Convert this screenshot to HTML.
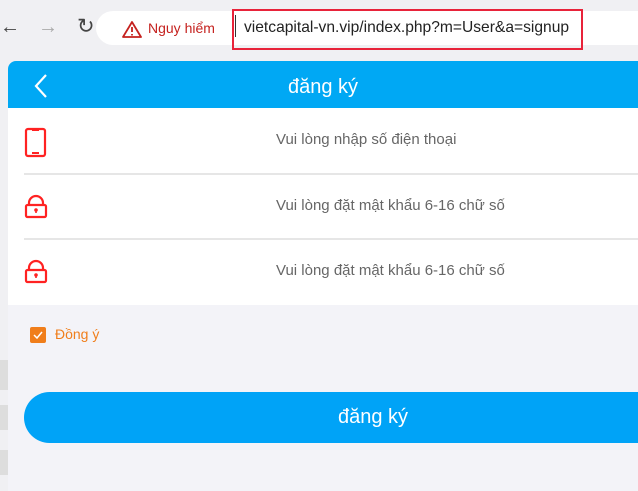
<!DOCTYPE html>
<html><head><style>
*{margin:0;padding:0;box-sizing:border-box}
body{width:638px;height:480px;overflow:hidden;background:#f0f0f3;font-family:"Liberation Sans","DejaVu Sans",sans-serif;position:relative}
.abs{position:absolute}
.pill{left:96px;top:11px;width:560px;height:34px;background:#fff;border-radius:17px 0 0 17px}
.red{left:232px;top:9px;width:351px;height:41px;border:2px solid #e8233a}
.url{left:244px;top:19px;font-size:15.6px;color:#222}
.warn{left:148px;top:20px;font-size:14px;color:#c5221f}
.page{left:8px;top:61px;width:640px;height:430px;background:#f3f3f8;border-radius:8px 0 0 0;overflow:hidden}
.hdr{left:0;top:0;width:640px;height:47px;background:#00a8f4}
.title{left:0;width:630px;top:15px;text-align:center;color:#fff;font-size:20px}
.white{left:0;top:47px;width:640px;height:197px;background:#fff}
.ph{font-size:15px;color:#666;left:268px}
.div{left:16px;width:640px;height:2px;background:#e6e6e6}
.btn{left:16px;top:331px;width:640px;height:51px;background:#00a3f7;border-radius:26px}
.bt{left:330px;top:345px;color:#fff;font-size:20px}
.chk{left:22px;top:266px;width:16px;height:16px;background:#f07e1b;border-radius:2px}
.ag{left:47px;top:265px;color:#f07e1b;font-size:14px}
</style></head><body>
<div class="abs" style="left:0;top:16px;font-size:20px;color:#444">←</div>
<div class="abs" style="left:38px;top:16px;font-size:20px;color:#aaa">→</div>
<div class="abs" style="left:77px;top:14px;font-size:21px;color:#444">↻</div>
<div class="abs pill"></div>
<svg class="abs" style="left:122px;top:20px" width="20" height="18"><path d="M10 2L19 17H1Z" fill="none" stroke="#c5221f" stroke-width="1.8" stroke-linejoin="round"/><path d="M10 7v5M10 14v1.5" stroke="#c5221f" stroke-width="1.8"/></svg>
<div class="abs warn">Nguy hiểm</div>
<div class="abs" style="left:235px;top:15px;width:1px;height:22px;background:#333"></div>
<div class="abs red"></div>
<div class="abs url">vietcapital-vn.vip/index.php?m=User&amp;a=signup</div>
<div class="abs" style="left:0;top:360px;width:8px;height:30px;background:#ddd"></div>
<div class="abs" style="left:0;top:405px;width:8px;height:25px;background:#ddd"></div>
<div class="abs" style="left:0;top:450px;width:8px;height:25px;background:#ddd"></div>
<div class="abs page">
 <div class="abs hdr"></div>
 <svg class="abs" style="left:25px;top:12px" width="16" height="26"><path d="M13 2L3 13L13 24" fill="none" stroke="#fff" stroke-width="2.2"/></svg>
 <div class="abs title">đăng ký</div>
 <div class="abs white"></div>
 <svg class="abs" style="left:16px;top:66px" width="24" height="32"><rect x="2" y="2" width="19" height="27" rx="2" fill="none" stroke="#f22" stroke-width="2.2"/><path d="M8 3h7M8 26h7" stroke="#f22" stroke-width="2"/></svg>
 <div class="abs ph" style="top:70px">Vui lòng nhập số điện thoại</div>
 <div class="abs div" style="top:112px"></div>
 <svg class="abs" style="left:16px;top:132px" width="24" height="26"><path d="M5 12V10a7 7 0 0 1 14 0v2" fill="none" stroke="#f22" stroke-width="2.2"/><rect x="2" y="12" width="20" height="12" rx="1.5" fill="none" stroke="#f22" stroke-width="2.2"/><circle cx="12" cy="17" r="1.8" fill="#f22"/><path d="M12 17v3" stroke="#f22" stroke-width="1.6"/></svg>
 <div class="abs ph" style="top:136px">Vui lòng đặt mật khẩu 6-16 chữ số</div>
 <div class="abs div" style="top:177px"></div>
 <svg class="abs" style="left:16px;top:197px" width="24" height="26"><path d="M5 12V10a7 7 0 0 1 14 0v2" fill="none" stroke="#f22" stroke-width="2.2"/><rect x="2" y="12" width="20" height="12" rx="1.5" fill="none" stroke="#f22" stroke-width="2.2"/><circle cx="12" cy="17" r="1.8" fill="#f22"/><path d="M12 17v3" stroke="#f22" stroke-width="1.6"/></svg>
 <div class="abs ph" style="top:201px">Vui lòng đặt mật khẩu 6-16 chữ số</div>
 <div class="abs chk"><svg width="16" height="16"><path d="M4 8l3 3 5-6" fill="none" stroke="#fff" stroke-width="1.5"/></svg></div>
 <div class="abs ag">Đồng ý</div>
 <div class="abs btn"></div>
 <div class="abs bt">đăng ký</div>
</div>
</body></html>
